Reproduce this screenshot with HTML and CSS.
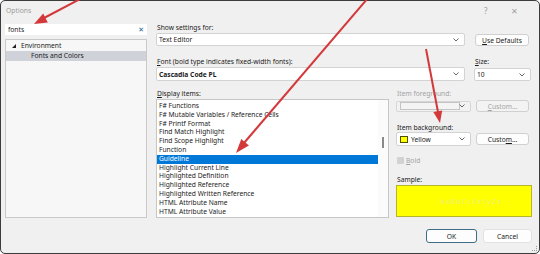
FILE: index.html
```html
<!DOCTYPE html>
<html>
	<head>
		<link rel="stylesheet" href="styles.css">
		<title>Options</title>
	</head>
	<body>
		<div class="dialog">
			<div class="titlebar">
				<span class="title">Options</span>
				<span class="help">?</span>
				<span class="close">&#10005;</span>
			</div>
			<div class="content">
				<div class="nav">
					<div class="search">
						<span>fonts</span>
						<span class="clear">&#10005;</span>
					</div>
					<div class="tree">
						<div class="node"><span class="twisty"></span>Environment</div>
						<div class="node child selected">Fonts and Colors</div>
					</div>
				</div>
				<div class="settings">
					<div class="label">Show settings for:</div>
					<div class="row">
						<div class="combo wide">Text Editor<svg class="chev" width="6" height="4" viewBox="0 0 6 4"><polyline points="0.5,0.5 3,3 5.5,0.5"/></svg></div>
						<div class="button defaults"><u>U</u>se Defaults</div>
					</div>
					<div class="fontgrid">
						<div class="label"><u>F</u>ont (bold type indicates fixed-width fonts):</div>
						<div class="label"><u>S</u>ize:</div>
						<div class="combo wide tall bold">Cascadia Code PL<svg class="chev" width="6" height="4" viewBox="0 0 6 4"><polyline points="0.5,0.5 3,3 5.5,0.5"/></svg></div>
						<div class="combo size">10<svg class="chev" width="6" height="4" viewBox="0 0 6 4"><polyline points="0.5,0.5 3,3 5.5,0.5"/></svg></div>
					</div>
					<div class="lower">
						<div class="items">
							<div class="label"><u>D</u>isplay items:</div>
							<div class="list">
								<div class="rows">
									<div class="item">F# Functions</div>
									<div class="item">F# Mutable Variables / Reference Cells</div>
									<div class="item">F# Printf Format</div>
									<div class="item">Find Match Highlight</div>
									<div class="item">Find Scope Highlight</div>
									<div class="item">Function</div>
									<div class="item selected">Guideline</div>
									<div class="item">Highlight Current Line</div>
									<div class="item">Highlighted Definition</div>
									<div class="item">Highlighted Reference</div>
									<div class="item">Highlighted Written Reference</div>
									<div class="item">HTML Attribute Name</div>
									<div class="item">HTML Attribute Value</div>
									<div class="item">HTML Element Name</div>
								</div>
								<div class="scroll"><div class="thumb"></div></div>
							</div>
						</div>
						<div class="colors">
							<div class="label disabled">Item foreground:</div>
							<div class="pair first">
								<div class="combo color off"><span class="swatch empty"></span><svg class="chev" width="6" height="4" viewBox="0 0 6 4"><polyline points="0.5,0.5 3,3 5.5,0.5"/></svg></div>
								<div class="button custom off"><u>C</u>ustom...</div>
							</div>
							<div class="label bg">Item background:</div>
							<div class="pair second">
								<div class="combo color"><span class="swatch"></span>Yellow<svg class="chev" width="6" height="4" viewBox="0 0 6 4"><polyline points="0.5,0.5 3,3 5.5,0.5"/></svg></div>
								<div class="button custom">Custo<u>m</u>...</div>
							</div>
							<div class="check disabled"><span class="box"></span><u>B</u>old</div>
							<div class="label sample-label">Sample:</div>
							<div class="sample">AaBbCcXxYyZz</div>
						</div>
					</div>
					<div class="footer">
						<div class="button ok">OK</div>
						<div class="button cancel">Cancel</div>
					</div>
				</div>
			</div>
			<div class="grip"></div>
		</div>
		<svg class="arrows" width="540" height="254" viewBox="0 0 540 254">
			<line x1="82" y1="-2" x2="44" y2="18"/>
			<polygon points="34,24 43.2,13.6 47.8,22.4"/>
			<line x1="368" y1="-2" x2="244" y2="143"/>
			<polygon points="236,153 241.3,139.1 248.9,145.6"/>
			<line x1="426" y1="49" x2="438" y2="112"/>
			<polygon points="440,123 433.3,112 442.2,110.4"/>
		</svg>
	</body>
</html>
```

FILE: styles.css
```css
html, body {
	margin: 0;
	padding: 0;
	background: #ffffff;
}
body {
	position: relative;
	width: 540px;
	height: 254px;
	overflow: hidden;
	font-family: "Noto Sans", "DejaVu Sans", sans-serif;
	font-size: 6.7px;
	color: #1b1b1b;
}
u {
	text-decoration: underline;
	text-underline-offset: 1px;
}

.dialog {
	box-sizing: border-box;
	width: 540px;
	height: 254px;
	border: 1px solid #3c3c3c;
	border-radius: 5px;
	background: #f0f0f0;
	position: relative;
}

.titlebar {
	height: 19px;
	display: flex;
	align-items: center;
	padding: 0 0 0 5px;
	color: #9b9b9b;
	font-size: 6.8px;
}
.title {
	flex: 1;
}
.help {
	width: 27px;
	font-size: 8px;
}
.close {
	width: 28px;
	font-size: 8px;
	color: #a0a0a0;
}

.content {
	display: flex;
	gap: 9px;
	padding: 4px 7px 0 4px;
}

.nav {
	width: 142px;
	display: flex;
	flex-direction: column;
	gap: 4px;
}
.search {
	height: 11px;
	background: #ffffff;
	display: flex;
	align-items: center;
	justify-content: space-between;
	padding: 0 3px;
}
.clear {
	color: #1f5f9e;
	font-size: 7px;
	font-weight: bold;
}
.tree {
	box-sizing: border-box;
	height: 179px;
	border: 1px solid #c9c9c9;
	background: #f7f7f7;
	padding-top: 1px;
}
.node {
	height: 10px;
	line-height: 10px;
	display: flex;
	align-items: center;
	padding-left: 6px;
}
.twisty {
	width: 0;
	height: 0;
	border-left: 4px solid transparent;
	border-bottom: 4px solid #222;
	margin-right: 5px;
}
.node.child {
	padding-left: 25px;
}
.node.selected {
	background: #cfd2d9;
}

.settings {
	flex: 1;
	display: flex;
	flex-direction: column;
}
.label {
	height: 9px;
	line-height: 9px;
	margin-top: -1px;
	padding-left: 1px;
	white-space: nowrap;
}
.disabled {
	color: #a3a3a3;
}

.row {
	display: flex;
	align-items: center;
	gap: 10px;
	margin-top: 1px;
}
.combo {
	box-sizing: border-box;
	height: 13px;
	background: #ffffff;
	border: 1px solid #d3d3d3;
	border-radius: 2px;
	display: flex;
	align-items: center;
	padding: 0 0 0 2px;
	position: relative;
}
.chev {
	position: absolute;
	right: 5px;
	top: 50%;
	margin-top: -2px;
	fill: none;
	stroke: #555;
	stroke-width: 0.9;
}
.combo.wide {
	width: 309px;
}
.combo.tall {
	height: 14px;
}
.combo.bold {
	font-weight: bold;
}
.combo.size {
	width: 57px;
	margin-top: 1px;
}

.button {
	box-sizing: border-box;
	height: 12px;
	background: #fdfdfd;
	border: 1px solid #d0d0d0;
	border-radius: 3px;
	display: flex;
	align-items: center;
	justify-content: center;
}
.button.defaults {
	width: 54px;
	margin-top: 1px;
}

.fontgrid {
	display: grid;
	grid-template-columns: 309px 57px;
	column-gap: 9px;
	row-gap: 1px;
	margin-top: 12px;
	align-items: start;
}

.lower {
	display: flex;
	gap: 7px;
	margin-top: 9px;
}
.items {
	width: 233px;
}
.list {
	box-sizing: border-box;
	height: 119px;
	margin-top: 1px;
	border: 1px solid #c6c6c6;
	background: #ffffff;
	display: flex;
	overflow: hidden;
}
.rows {
	flex: 1;
	padding-top: 2px;
}
.item {
	height: 8.8px;
	line-height: 8.8px;
	padding-left: 2px;
	white-space: nowrap;
}
.item.selected {
	background: #0078d7;
	color: #ffffff;
}
.scroll {
	width: 10px;
	position: relative;
	background: #fbfbfb;
}
.thumb {
	position: absolute;
	left: 4px;
	top: 37px;
	width: 1.5px;
	height: 11px;
	background: #8a8a8a;
}

.colors {
	width: 136px;
	display: flex;
	flex-direction: column;
}
.pair {
	display: flex;
	align-items: center;
	gap: 5px;
}
.pair.first {
	margin-top: 2px;
}
.pair.second {
	margin-top: 0.5px;
}
.combo.color {
	width: 75px;
	height: 14px;
	padding-left: 3px;
}
.combo.color.off {
	height: 11px;
	background: #f2f2f2;
	border-color: #d6d6d6;
}
.swatch {
	box-sizing: border-box;
	width: 8px;
	height: 7px;
	background: #ffff00;
	border: 1px solid #505000;
	margin-right: 3px;
}
.swatch.empty {
	width: 60px;
	height: 8px;
	background: #f4f4f4;
	border-color: #c4c4c4;
}
.button.custom {
	width: 53px;
	height: 12px;
}
.button.custom.off {
	color: #a3a3a3;
	background: #f3f3f3;
}
.label.bg {
	margin-top: 10.5px;
}
.check {
	display: flex;
	align-items: center;
	margin-top: 9.5px;
	height: 9px;
	padding-left: 1px;
}
.box {
	width: 7px;
	height: 7px;
	background: #d2d2d2;
	border-radius: 1px;
	margin-right: 2px;
}
.label.sample-label {
	margin-top: 10px;
}
.sample {
	box-sizing: border-box;
	height: 32px;
	margin-top: 1.5px;
	background: #ffff00;
	border: 1px solid #b5b52e;
	color: #f0f07a;
	display: flex;
	align-items: center;
	justify-content: center;
	padding-left: 14px;
	font-size: 7px;
	letter-spacing: 1.2px;
}

.footer {
	display: flex;
	justify-content: flex-end;
	gap: 6px;
	margin-top: 11px;
}
.button.ok {
	width: 51px;
	height: 14px;
	border: 1px solid #3d6e85;
}
.button.cancel {
	width: 49px;
	height: 14px;
	border-color: #e2e2e2;
}

.grip {
	position: absolute;
	right: 2px;
	bottom: 2px;
	width: 4px;
	height: 4px;
	border-right: 1px dotted #999;
	border-bottom: 1px dotted #999;
}

.arrows {
	position: absolute;
	left: 0;
	top: 0;
}
.arrows line {
	stroke: #d3393b;
	stroke-width: 2;
}
.arrows polygon {
	fill: #d3393b;
}
```
